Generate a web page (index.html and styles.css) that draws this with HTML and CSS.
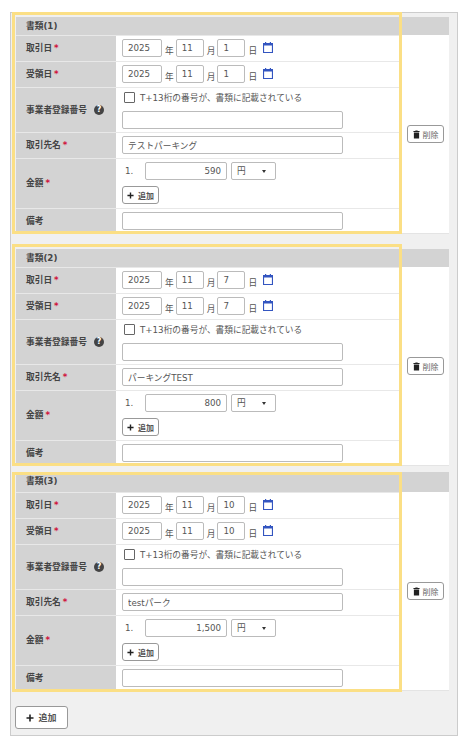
FILE: index.html
```html
<!DOCTYPE html>
<html lang="ja">
<head>
    <meta charset="UTF-8">
    <meta name="viewport" content="width=device-width, initial-scale=1.0">
    <title>書類</title>
    <link rel="stylesheet" href="styles.css">
</head>
<body>
    <svg class="icon-defs" width="0" height="0">
        <symbol id="icon-calendar" viewBox="0 0 10 11">
            <path d="M2 0h1.2v1h3.6v-1h1.2v1h2v10h-10v-10h2z M1.1 3.6v6.3h7.8v-6.3z" fill="#3355c0" fill-rule="evenodd"/>
        </symbol>
        <symbol id="icon-trash" viewBox="0 0 8 10">
            <path d="M0.5 1h2l0.4-0.7h2.2l0.4 0.7h2v1.2h-7z M1 2.8h6v6.9h-6z" fill="#222"/>
        </symbol>
        <symbol id="icon-plus" viewBox="0 0 8 8">
            <path d="M3.2 0.5h1.6v2.7h2.7v1.6h-2.7v2.7h-1.6v-2.7h-2.7v-1.6h2.7z" fill="#222"/>
        </symbol>
    </svg>

    <div class="panel">
        <!-- 書類(1) -->
        <div class="card">
            <div class="card-title">書類(1)</div>
            <div class="card-body">
                <div class="rows">
                    <div class="row row-date">
                        <div class="label">取引日<span class="req">*</span></div>
                        <div class="value date-line">
                            <input class="field f-year" value="2025"><span>年</span>
                            <input class="field f-day" value="11"><span>月</span>
                            <input class="field f-day" value="1"><span>日</span>
                            <svg class="calendar"><use href="#icon-calendar"/></svg>
                        </div>
                    </div>
                    <div class="row row-date">
                        <div class="label">受領日<span class="req">*</span></div>
                        <div class="value date-line">
                            <input class="field f-year" value="2025"><span>年</span>
                            <input class="field f-day" value="11"><span>月</span>
                            <input class="field f-day" value="1"><span>日</span>
                            <svg class="calendar"><use href="#icon-calendar"/></svg>
                        </div>
                    </div>
                    <div class="row row-reg">
                        <div class="label">事業者登録番号<span class="help">?</span></div>
                        <div class="value stack">
                            <label class="check"><span class="box"></span>T+13桁の番号が、書類に記載されている</label>
                            <input class="field f-wide">
                        </div>
                    </div>
                    <div class="row row-text">
                        <div class="label">取引先名<span class="req">*</span></div>
                        <div class="value"><input class="field f-wide" value="テストパーキング"></div>
                    </div>
                    <div class="row row-amount">
                        <div class="label">金額<span class="req">*</span></div>
                        <div class="value stack-amount">
                            <div class="amount-line">
                                <span class="num">1.</span>
                                <input class="field f-amount" value="590">
                                <div class="select">円<span class="caret"></span></div>
                            </div>
                            <button class="btn btn-small"><svg class="plus"><use href="#icon-plus"/></svg>追加</button>
                        </div>
                    </div>
                    <div class="row row-note">
                        <div class="label">備考</div>
                        <div class="value"><input class="field f-wide"></div>
                    </div>
                </div>
                <div class="side">
                    <button class="btn btn-delete"><svg class="trash"><use href="#icon-trash"/></svg>削除</button>
                </div>
            </div>
            <div class="highlight"></div>
        </div>

        <!-- 書類(2) -->
        <div class="card">
            <div class="card-title">書類(2)</div>
            <div class="card-body">
                <div class="rows">
                    <div class="row row-date">
                        <div class="label">取引日<span class="req">*</span></div>
                        <div class="value date-line">
                            <input class="field f-year" value="2025"><span>年</span>
                            <input class="field f-day" value="11"><span>月</span>
                            <input class="field f-day" value="7"><span>日</span>
                            <svg class="calendar"><use href="#icon-calendar"/></svg>
                        </div>
                    </div>
                    <div class="row row-date">
                        <div class="label">受領日<span class="req">*</span></div>
                        <div class="value date-line">
                            <input class="field f-year" value="2025"><span>年</span>
                            <input class="field f-day" value="11"><span>月</span>
                            <input class="field f-day" value="7"><span>日</span>
                            <svg class="calendar"><use href="#icon-calendar"/></svg>
                        </div>
                    </div>
                    <div class="row row-reg">
                        <div class="label">事業者登録番号<span class="help">?</span></div>
                        <div class="value stack">
                            <label class="check"><span class="box"></span>T+13桁の番号が、書類に記載されている</label>
                            <input class="field f-wide">
                        </div>
                    </div>
                    <div class="row row-text">
                        <div class="label">取引先名<span class="req">*</span></div>
                        <div class="value"><input class="field f-wide" value="パーキングTEST"></div>
                    </div>
                    <div class="row row-amount">
                        <div class="label">金額<span class="req">*</span></div>
                        <div class="value stack-amount">
                            <div class="amount-line">
                                <span class="num">1.</span>
                                <input class="field f-amount" value="800">
                                <div class="select">円<span class="caret"></span></div>
                            </div>
                            <button class="btn btn-small"><svg class="plus"><use href="#icon-plus"/></svg>追加</button>
                        </div>
                    </div>
                    <div class="row row-note">
                        <div class="label">備考</div>
                        <div class="value"><input class="field f-wide"></div>
                    </div>
                </div>
                <div class="side">
                    <button class="btn btn-delete"><svg class="trash"><use href="#icon-trash"/></svg>削除</button>
                </div>
            </div>
            <div class="highlight"></div>
        </div>

        <!-- 書類(3) -->
        <div class="card">
            <div class="card-title">書類(3)</div>
            <div class="card-body">
                <div class="rows">
                    <div class="row row-date">
                        <div class="label">取引日<span class="req">*</span></div>
                        <div class="value date-line">
                            <input class="field f-year" value="2025"><span>年</span>
                            <input class="field f-day" value="11"><span>月</span>
                            <input class="field f-day" value="10"><span>日</span>
                            <svg class="calendar"><use href="#icon-calendar"/></svg>
                        </div>
                    </div>
                    <div class="row row-date">
                        <div class="label">受領日<span class="req">*</span></div>
                        <div class="value date-line">
                            <input class="field f-year" value="2025"><span>年</span>
                            <input class="field f-day" value="11"><span>月</span>
                            <input class="field f-day" value="10"><span>日</span>
                            <svg class="calendar"><use href="#icon-calendar"/></svg>
                        </div>
                    </div>
                    <div class="row row-reg">
                        <div class="label">事業者登録番号<span class="help">?</span></div>
                        <div class="value stack">
                            <label class="check"><span class="box"></span>T+13桁の番号が、書類に記載されている</label>
                            <input class="field f-wide">
                        </div>
                    </div>
                    <div class="row row-text">
                        <div class="label">取引先名<span class="req">*</span></div>
                        <div class="value"><input class="field f-wide" value="testパーク"></div>
                    </div>
                    <div class="row row-amount">
                        <div class="label">金額<span class="req">*</span></div>
                        <div class="value stack-amount">
                            <div class="amount-line">
                                <span class="num">1.</span>
                                <input class="field f-amount" value="1,500">
                                <div class="select">円<span class="caret"></span></div>
                            </div>
                            <button class="btn btn-small"><svg class="plus"><use href="#icon-plus"/></svg>追加</button>
                        </div>
                    </div>
                    <div class="row row-note">
                        <div class="label">備考</div>
                        <div class="value"><input class="field f-wide"></div>
                    </div>
                </div>
                <div class="side">
                    <button class="btn btn-delete"><svg class="trash"><use href="#icon-trash"/></svg>削除</button>
                </div>
            </div>
            <div class="highlight"></div>
        </div>

        <button class="btn btn-add"><svg class="plus plus-large"><use href="#icon-plus"/></svg>追加</button>
    </div>
</body>
</html>
```

FILE: styles.css
```css
* {
    margin: 0;
    padding: 0;
    box-sizing: border-box;
}

body {
    background: #fff;
    padding: 12px 7px 0 10px;
    font-family: "DejaVu Sans", "Noto Sans CJK JP", sans-serif;
    font-size: 8.7px;
    color: #555;
}

.icon-defs {
    position: absolute;
}

.panel {
    width: 448px;
    height: 724px;
    padding: 4px 8px 0 5px;
    background: #f0f0f0;
    border: 1px solid #ccc;
}

.card {
    position: relative;
    margin-bottom: 15px;
    background: #fff;
}

.card:nth-child(2) {
    margin-bottom: 6px;
}

.card:nth-child(3) {
    margin-bottom: 15px;
}

.card-title {
    height: 18px;
    padding-left: 10px;
    background: #d3d3d3;
    font-weight: 700;
    line-height: 18px;
    color: #444;
}

.card:nth-child(3) .card-title {
    height: 20px;
}

.card-body {
    display: flex;
    border-bottom: 1px solid #e4e4e4;
}

.rows {
    width: 385px;
}

.row {
    display: flex;
    border-top: 1px solid #e8e8e8;
}

.row-date {
    height: 26px;
}

.row-reg {
    height: 45px;
}

.row-text {
    height: 26px;
}

.row-amount {
    height: 50px;
}

.row-note {
    height: 25px;
}

.label {
    display: flex;
    align-items: center;
    width: 100px;
    padding: 0 0 2px 10px;
    background: #d3d3d3;
    font-weight: 700;
    color: #444;
}

.req {
    margin-left: 2px;
    color: #d0103a;
}

.help {
    display: inline-block;
    width: 10.5px;
    height: 10.5px;
    margin: 2px 0 0 7px;
    border-radius: 50%;
    background: #444;
    color: #fff;
    font-size: 8px;
    line-height: 10.5px;
    text-align: center;
}

.value {
    flex: 1;
    padding: 3px 0 0 6px;
}

.field {
    display: block;
    height: 18px;
    padding: 0 5px;
    background: #fff;
    border: 1px solid #bbb;
    border-radius: 2px;
    font-family: "DejaVu Sans", "Noto Sans CJK JP", sans-serif;
    font-size: 8.7px;
    color: #555;
    outline: none;
}

.date-line {
    display: flex;
    align-items: flex-start;
    line-height: 20px;
}

.date-line span {
    margin: 2px 2px 0 3px;
}

.f-year {
    width: 40px;
}

.f-day {
    width: 28px;
}

.calendar {
    width: 10px;
    height: 11px;
    margin: 3px 0 0 4px;
}

.f-wide {
    width: 221px;
}

.check {
    display: flex;
    align-items: center;
    height: 18px;
    margin-left: 2px;
    margin-bottom: 5px;
}

.box {
    width: 11px;
    height: 11px;
    margin-right: 5px;
    background: #fff;
    border: 1px solid #666;
    border-radius: 1px;
}

.stack {
    padding-top: 0;
}

.amount-line {
    display: flex;
    align-items: center;
}

.num {
    width: 23px;
    padding-left: 3px;
}

.f-amount {
    width: 82px;
    margin-right: 4px;
    text-align: right;
}

.select {
    position: relative;
    width: 45px;
    height: 18px;
    padding-left: 5px;
    background: #fff;
    border: 1px solid #bbb;
    border-radius: 2px;
    line-height: 16px;
}

.caret {
    position: absolute;
    top: 7px;
    right: 9px;
    border-top: 3px solid #333;
    border-left: 2px solid transparent;
    border-right: 2px solid transparent;
}

.btn {
    display: inline-flex;
    align-items: center;
    justify-content: center;
    background: #fff;
    border: 1px solid #999;
    border-radius: 3px;
    font-family: "DejaVu Sans", "Noto Sans CJK JP", sans-serif;
    font-weight: 700;
    color: #555;
}

.btn-small {
    width: 37px;
    height: 18px;
    margin-top: 6px;
    font-size: 8px;
}

.plus {
    width: 7px;
    height: 7px;
    margin-right: 4px;
}

.side {
    display: flex;
    flex: 1;
    align-items: center;
    justify-content: flex-end;
    padding-right: 5px;
}

.btn-delete {
    width: 37px;
    height: 18px;
    font-size: 8px;
    font-weight: 400;
    color: #666;
}

.trash {
    width: 7px;
    height: 9px;
    margin-right: 3px;
}

.btn-add {
    width: 53px;
    height: 23px;
    margin-left: -1px;
    font-size: 9px;
}

.plus-large {
    width: 8px;
    height: 8px;
}

/* yellow annotation drawn over the form */
.highlight {
    position: absolute;
    top: -5px;
    left: -4px;
    width: 390px;
    height: 222px;
    border: 3.5px solid #fbdf85;
    pointer-events: none;
}

.card:nth-child(3) .highlight {
    top: 0;
    height: 220px;
}
```
